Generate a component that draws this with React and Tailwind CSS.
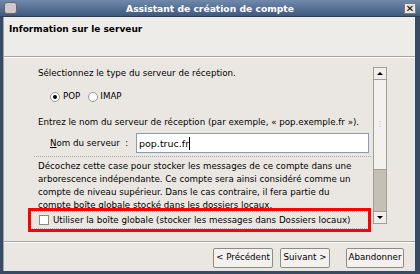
import React from "react";

export default function App() {
  const font = { fontFamily: '"DejaVu Sans", sans-serif' };
  return (
    <div className="w-[420px] h-[274px] bg-[#394a62] flex flex-col overflow-hidden" style={font}>
      {/* title bar */}
      <div className="h-[17px] flex items-center relative bg-gradient-to-b from-[#7189aa] to-[#405a7e] shrink-0 border-b border-[#2e3d52]">
        <div className="absolute left-[4px] top-[2px] w-[13px] h-[12px] rounded-[3px] bg-[#cfc8cc] border border-[#6d6470]" />
        <div className="flex-1 text-center text-white font-bold text-[9.2px] leading-none pt-[1px]">Assistant de création de compte</div>
        <div className="absolute right-[4px] top-[3px] w-[12px] h-[11px] bg-[#e8e6e1] border border-[#7d7d7d] flex items-center justify-center text-[10px] leading-none text-black font-bold">✕</div>
      </div>
      <div className="flex-1 flex ml-[3px] mr-[5px] mb-[3px] bg-[#eae7e2] border-l border-[#9aa6b6]">
        <div className="flex-1 flex flex-col">
          {/* header */}
          <div className="h-[40px] bg-[#eeece8] border-b border-[#a8a59f] px-[5px] pt-[6px] text-[9px] leading-[13px] font-bold text-black">
            Information sur le serveur
          </div>
          <div className="border-t border-white" />
          {/* content */}
          <div className="flex pl-[26px] pt-[9px]">
            <div className="w-[341px] text-[8.7px] text-black leading-[13px]">
              <div className="pl-[8px] whitespace-nowrap">Sélectionnez le type du serveur de réception.</div>
              <div className="pl-[20px] mt-[10px] h-[13px] flex items-center">
                <span className="w-[10px] h-[10px] rounded-full border border-[#9a9792] bg-white flex items-center justify-center">
                  <span className="w-[4px] h-[4px] rounded-full bg-black" />
                </span>
                <span className="ml-[3px]">POP</span>
                <span className="ml-[8px] w-[10px] h-[10px] rounded-full border border-[#9a9792] bg-white" />
                <span className="ml-[2px]">IMAP</span>
              </div>
              <div className="pl-[8px] mt-[13px] whitespace-nowrap">Entrez le nom du serveur de réception (par exemple, « pop.exemple.fr »).</div>
              <div className="pl-[20px] mt-[4px] flex items-center">
                <span className="w-[86px] whitespace-nowrap"><u>N</u>om du serveur&nbsp;&nbsp;:</span>
                <div className="flex-1 h-[20px] mr-[2px] bg-white border border-[#8d9bb0] flex items-center px-[2px] text-[9.5px]">
                  pop.truc.fr<span className="w-px h-[13px] bg-black" />
                </div>
              </div>
              <div className="ml-[4px] mt-[3px] border-t border-dotted border-[#a9a6a0]" />
              <div className="pl-[8px] pt-[3px] pr-[2px] whitespace-nowrap">
                Décochez cette case pour stocker les messages de ce compte dans une<br />
                arborescence indépendante. Ce compte sera ainsi considéré comme un<br />
                compte de niveau supérieur. Dans le cas contraire, il fera partie du<br />
                compte boîte globale stocké dans les dossiers locaux.
              </div>
              <div className="relative h-[18px] -mt-[1px] mr-[2px] border border-dotted border-[#b8b5af] flex items-center">
                <span className="ml-[8px] w-[10px] h-[10px] bg-white border border-[#8d8a85]" />
                <span className="ml-[4px] whitespace-nowrap">Utiliser la boîte globale (stocker les messages dans Dossiers locaux)</span>
                <div className="absolute -top-[4px] -bottom-[4px] -left-[3px] -right-[3px] border-[3px] border-[#ff0000]" />
              </div>
            </div>
            {/* scrollbar */}
            <div className="w-[14px] ml-[2px] h-[157px] bg-[#c4c0b8] border border-[#a29e96] flex flex-col">
              <div className="h-[12px] bg-[#f0eeea] border-b border-[#a29e96] flex items-center justify-center">
                <span className="w-0 h-0 border-l-[3px] border-r-[3px] border-b-[3px] border-l-transparent border-r-transparent border-b-black" />
              </div>
              <div className="h-[90px] bg-[#f3f1ed] border-b border-[#a29e96] flex items-center justify-center">
                <span className="text-[7px] leading-[7px] text-[#a8a5a0]">⋮</span>
              </div>
              <div className="flex-1" />
              <div className="h-[12px] bg-[#f0eeea] border-t border-[#a29e96] flex items-center justify-center">
                <span className="w-0 h-0 border-l-[3px] border-r-[3px] border-t-[3px] border-l-transparent border-r-transparent border-t-black" />
              </div>
            </div>
          </div>
          <div className="mt-[12px] border-t border-[#a8a59f]" />
          <div className="border-t border-white" />
          <div className="flex justify-end pr-[11px] pt-[5px] text-[8.7px]">
            <div className="h-[20px] w-[60px] justify-center border border-[#8e8b85] bg-[#f3f1ee] rounded-[2px] flex items-center">&lt; Précédent</div>
            <div className="h-[20px] w-[50px] ml-[7px] justify-center border border-[#8e8b85] bg-[#f3f1ee] rounded-[2px] flex items-center">Suivant &gt;</div>
            <div className="h-[20px] w-[58px] ml-[16px] justify-center border border-[#8e8b85] bg-[#f3f1ee] rounded-[2px] flex items-center">Abandonner</div>
          </div>
        </div>
      </div>
    </div>
  );
}
